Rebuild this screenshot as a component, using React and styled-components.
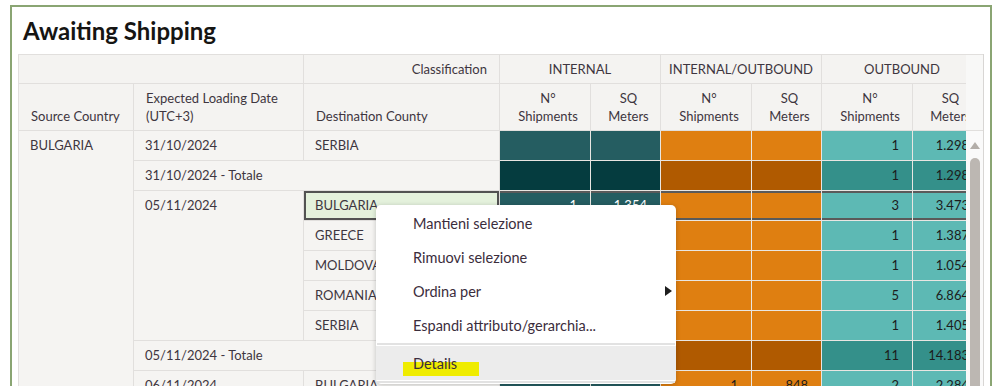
import React from 'react';
import styled, { createGlobalStyle, css } from 'styled-components';

const Global = createGlobalStyle`
  html, body { margin: 0; padding: 0; overflow: hidden; background: #ffffff; }
  body { font-family: Lato, "Open Sans", sans-serif; }
`;

const Frame = styled.section`
  position: relative;
  box-sizing: border-box;
  margin: 5px 0 0 10px;
  width: 982px;
  height: 400px;
  border: 2px solid #8aa573;
  border-bottom: none;
  padding: 9px 0 0 6px;
  background: #ffffff;
`;

const Title = styled.h1`
  margin: 0 0 8px 5px;
  font: 700 24px/30px Lato, "Open Sans", sans-serif;
  color: #161513;
`;

const Body = styled.div`
  display: flex;
  align-items: stretch;
`;

const Viewport = styled.div`
  width: 948px;
  height: 340px;
  overflow: hidden;
`;

const Grid = styled.div`
  display: grid;
  width: 975px;
  box-sizing: border-box;
  grid-template-columns: 115px 170px 196px 91px 70px 91px 70px 91px 70px;
  grid-template-rows: 29px 47px repeat(9, 30px);
  border-top: 1px solid #e1dfdd;
  border-left: 1px solid #e1dfdd;
  font: 400 13px Lato, "Open Sans", sans-serif;
  color: #3e3640;
`;

const spans = css`
  grid-column: ${p => (p.$cols ? `span ${p.$cols}` : 'auto')};
  grid-row: ${p => (p.$rows ? `span ${p.$rows}` : 'auto')};
`;

const Head = styled.div`
  ${spans};
  box-sizing: border-box;
  display: flex;
  flex-direction: column;
  justify-content: ${p => (p.$top ? 'center' : 'flex-end')};
  align-items: ${p =>
    p.$align === 'right' ? 'flex-end' : p.$align === 'center' ? 'center' : 'flex-start'};
  text-align: ${p => p.$align || 'left'};
  background: #f4f3f1;
  border-right: 1px solid #e1dfdd;
  border-bottom: 1px solid #e1dfdd;
  padding: ${p => (p.$top ? '0 12px' : '0 6px 5px 12px')};
  line-height: 18px;
  white-space: nowrap;
  overflow: hidden;
`;

const Label = styled.div`
  ${spans};
  box-sizing: border-box;
  background: ${p => (p.$selected ? '#e4f1dc' : '#f5f4f2')};
  border-right: 1px solid #e1dfdd;
  border-bottom: 1px solid #e1dfdd;
  padding: 0 12px 0 11px;
  line-height: 29px;
  white-space: nowrap;
  overflow: hidden;
  ${p =>
    p.$selected &&
    css`
      box-shadow: inset 0 0 0 2px #525252;
    `}
`;

const palette = {
  int: ['#255d61', '#ffffff'],
  intTot: ['#053c3f', '#ffffff'],
  io: ['#df7f11', '#1c1c1c'],
  ioTot: ['#b05a00', '#1c1c1c'],
  out: ['#5db9b4', '#1c1c1c'],
  outTot: ['#34908a', '#1c1c1c'],
};

const Value = styled.div`
  box-sizing: border-box;
  background: ${p => palette[p.$kind][0]};
  color: ${p => palette[p.$kind][1]};
  border-right: 1px solid #e9e6e2;
  border-bottom: 1px solid #e9e6e2;
  padding: 0 13px 0 6px;
  line-height: 29px;
  text-align: right;
  white-space: nowrap;
  overflow: hidden;
  ${p =>
    p.$selected &&
    css`
      box-shadow: inset 0 2px 0 #5a5a5a, inset 0 -2px 0 #5a5a5a;
    `}
`;

const ScrollCol = styled.div`
  box-sizing: border-box;
  width: 18px;
  display: flex;
  flex-direction: column;
  border-right: 1px solid #d8d6d4;
`;

const ScrollHead = styled.div`
  box-sizing: border-box;
  height: 77px;
  background: #f8f8f7;
  border-top: 1px solid #e1dfdd;
  border-bottom: 1px solid #e1dfdd;
`;

const Track = styled.div`
  flex: 1;
  height: 280px;
  background: #fafafa;
  display: flex;
  flex-direction: column;
  align-items: center;
  padding-top: 11px;
`;

const UpArrow = styled.div`
  width: 0;
  height: 0;
  border-left: 5px solid transparent;
  border-right: 5px solid transparent;
  border-bottom: 7px solid #b3aea9;
`;

const Thumb = styled.div`
  margin-top: 9px;
  width: 10px;
  flex: 1;
  background: #bcb7b2;
  border-radius: 5px 5px 0 0;
`;

const Menu = styled.ul`
  position: absolute;
  left: 364px;
  top: 198px;
  width: 300px;
  margin: 0;
  padding: 1px 0 0;
  list-style: none;
  background: #ffffff;
  border-radius: 5px;
  box-shadow: 0 1px 5px rgba(0, 0, 0, 0.22);
  font: 400 14.5px Lato, "Open Sans", sans-serif;
  color: #3b2d3c;
`;

const MenuItem = styled.li`
  position: relative;
  isolation: isolate;
  display: flex;
  align-items: center;
  justify-content: space-between;
  height: 34px;
  padding: 0 4px 0 37px;
  background: ${p => (p.$active ? '#ececec' : 'transparent')};
`;

const Separator = styled.li`
  height: 2px;
  margin: 1px 1px;
  background: #e2e2e2;
`;

const SubArrow = styled.span`
  width: 0;
  height: 0;
  border-top: 5px solid transparent;
  border-bottom: 5px solid transparent;
  border-left: 7px solid #1e1e1e;
`;

const Marker = styled.span`
  position: absolute;
  z-index: -1;
  left: 27px;
  top: 16px;
  width: 76px;
  height: 14px;
  background: #efec00;
`;

function Values({ items, selected }) {
  return items.map(([kind, v], i) => (
    <Value key={i} $kind={kind} $selected={selected}>
      {v}
    </Value>
  ));
}

const plain = (c, d) => [
  ['int', ''],
  ['int', ''],
  ['io', ''],
  ['io', ''],
  ['out', c],
  ['out', d],
];

const totals = (c, d) => [
  ['intTot', ''],
  ['intTot', ''],
  ['ioTot', ''],
  ['ioTot', ''],
  ['outTot', c],
  ['outTot', d],
];

export default function App() {
  return (
    <>
      <Global />
      <Frame>
        <Title>Awaiting Shipping</Title>
        <Body>
          <Viewport>
            <Grid>
              <Head $top $cols={2} />
              <Head $top $align="right">Classification</Head>
              <Head $top $align="center" $cols={2}>INTERNAL</Head>
              <Head $top $align="center" $cols={2}>INTERNAL/OUTBOUND</Head>
              <Head $top $align="center" $cols={2}>OUTBOUND</Head>

              <Head>Source Country</Head>
              <Head>
                <span>Expected Loading Date</span>
                <span>(UTC+3)</span>
              </Head>
              <Head>Destination County</Head>
              {[0, 1, 2].map(k => (
                <React.Fragment key={k}>
                  <Head $align="center">
                    <span>N°</span>
                    <span>Shipments</span>
                  </Head>
                  <Head $align="center">
                    <span>SQ</span>
                    <span>Meters</span>
                  </Head>
                </React.Fragment>
              ))}

              <Label $rows={9}>BULGARIA</Label>
              <Label>31/10/2024</Label>
              <Label>SERBIA</Label>
              <Values items={plain('1', '1.298')} />

              <Label $cols={2}>31/10/2024 - Totale</Label>
              <Values items={totals('1', '1.298')} />

              <Label $rows={5}>05/11/2024</Label>
              <Label $selected>BULGARIA</Label>
              <Values
                selected
                items={[
                  ['int', '1'],
                  ['int', '1.354'],
                  ['io', ''],
                  ['io', ''],
                  ['out', '3'],
                  ['out', '3.473'],
                ]}
              />

              <Label>GREECE</Label>
              <Values items={plain('1', '1.387')} />

              <Label>MOLDOVA</Label>
              <Values items={plain('1', '1.054')} />

              <Label>ROMANIA</Label>
              <Values items={plain('5', '6.864')} />

              <Label>SERBIA</Label>
              <Values items={plain('1', '1.405')} />

              <Label $cols={2}>05/11/2024 - Totale</Label>
              <Values items={totals('11', '14.183')} />

              <Label>06/11/2024</Label>
              <Label>BULGARIA</Label>
              <Values
                items={[
                  ['int', ''],
                  ['int', ''],
                  ['io', '1'],
                  ['io', '848'],
                  ['out', '2'],
                  ['out', '2.284'],
                ]}
              />
            </Grid>
          </Viewport>
          <ScrollCol>
            <ScrollHead />
            <Track>
              <UpArrow />
              <Thumb />
            </Track>
          </ScrollCol>
        </Body>
        <Menu>
          <MenuItem>Mantieni selezione</MenuItem>
          <MenuItem>Rimuovi selezione</MenuItem>
          <MenuItem>
            Ordina per
            <SubArrow />
          </MenuItem>
          <MenuItem>Espandi attributo/gerarchia...</MenuItem>
          <Separator />
          <MenuItem $active>
            Details
            <Marker />
          </MenuItem>
          <Separator />
        </Menu>
      </Frame>
    </>
  );
}
